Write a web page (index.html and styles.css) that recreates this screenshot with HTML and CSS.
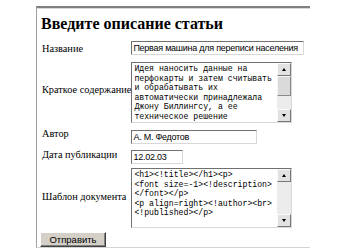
FILE: index.html
```html
<!DOCTYPE html>
<html lang="ru">
<head>
  <meta charset="UTF-8">
  <title>Описание статьи</title>
  <link rel="stylesheet" href="styles.css">
</head>
<body>
  <div class="frame">
    <h1>Введите описание статьи</h1>
    <form class="article-form">
      <table class="fields">
        <tr>
          <td class="label">Название</td>
          <td><input type="text" class="inp inp-title" value="Первая машина для переписи населения"></td>
        </tr>
        <tr>
          <td class="label">Краткое содержание</td>
          <td>
            <div class="box box-summary">
              <textarea class="area">Идея наносить данные на перфокарты и затем считывать и обрабатывать их автоматически принадлежала Джону Биллингсу, а ее техническое решение</textarea>
              <div class="vbar">
                <span class="vbtn up"></span>
                <span class="track"><span class="thumb"></span></span>
                <span class="vbtn down"></span>
              </div>
            </div>
          </td>
        </tr>
        <tr>
          <td class="label">Автор</td>
          <td><input type="text" class="inp inp-author" value="А. М. Федотов"></td>
        </tr>
        <tr>
          <td class="label">Дата публикации</td>
          <td><input type="text" class="inp inp-date" value="12.02.03"></td>
        </tr>
        <tr>
          <td class="label">Шаблон документа</td>
          <td>
            <div class="box box-template">
              <textarea class="area">&lt;h1&gt;&lt;!title&gt;&lt;/h1&gt;&lt;p&gt;
&lt;font size=-1&gt;&lt;!description&gt;
&lt;/font&gt;&lt;/p&gt;
&lt;p align=right&gt;&lt;!author&gt;&lt;br&gt;
&lt;!published&gt;&lt;/p&gt;</textarea>
              <div class="vbar">
                <span class="vbtn up"></span>
                <span class="track"></span>
                <span class="vbtn down"></span>
              </div>
            </div>
          </td>
        </tr>
      </table>
      <button type="button" class="send">Отправить</button>
    </form>
  </div>
</body>
</html>
```

FILE: styles.css
```css
body {
  margin: 0; background: #fff; color: #000;
  font-family: "Liberation Serif", "Times New Roman", serif;
}
.frame {
  margin: 6px 0 0 36px; width: 274px; height: 242px;
  border-top: 2px solid #808080; border-left: 1px solid #a0a0a0;
  border-bottom: 1px solid #d4d4d4;
  box-shadow: inset 0 1px 0 #d8d8d8;
  padding: 0 0 0 2px; box-sizing: border-box;
}
h1 { font-size: 16px; font-weight: bold; margin: 0; padding: 7px 0 0 2px; line-height: 18px; }
.fields { border-collapse: collapse; margin-top: 8px; }
.fields td { padding: 0; vertical-align: middle; }
.label { font-size: 10.3px; padding-left: 3px !important; width: 87px; white-space: nowrap; }

.inp {
  display: block; box-sizing: border-box; height: 14px; margin: 0; padding: 0 1px;
  font-family: "Liberation Sans", Arial, sans-serif; font-size: 9px; letter-spacing: -0.25px;
  border: 1px solid #707070; border-right-color: #d8d8d8; border-bottom-color: #d8d8d8;
  color: #000; outline: none;
}
.inp-title { width: 173px; }
.inp-author { width: 126px; margin-top: 7px; }
.inp-date { width: 52px; margin-top: 6px; }

.box {
  display: flex; width: 161px; box-sizing: border-box;
  border: 1px solid #707070; border-right-color: #d8d8d8; border-bottom-color: #d8d8d8;
}
.box-summary { height: 61px; margin-top: 7px; }
.box-template { height: 60px; margin-top: 4px; }
.area {
  flex: 1; min-width: 0; margin: 0; padding: 1px 0 0 2px; border: none; resize: none; outline: none;
  font-family: "Liberation Mono", "Courier New", monospace; font-size: 8.2px; line-height: 9.5px;
  overflow: hidden; white-space: pre-wrap; color: #000; background: #fff;
}
.vbar { width: 14px; display: flex; flex-direction: column; background: #ececec; }
.vbtn {
  display: flex; align-items: center; justify-content: center;
  height: 13px; box-sizing: border-box; background: #e2e2e2;
  border: 1px solid #fafafa; border-right-color: #777; border-bottom-color: #777;
}
.vbtn::after { content: ""; border-left: 2.5px solid transparent; border-right: 2.5px solid transparent; }
.up::after { border-bottom: 3px solid #000; }
.down::after { border-top: 3px solid #000; }
.track { flex: 1; display: block; }
.thumb {
  display: block; height: 20px; box-sizing: border-box; background: #dadada;
  border: 1px solid #f6f6f6; border-right-color: #888; border-bottom-color: #888;
}

.send {
  display: block; margin: 4px 0 0 1px; width: 66px; height: 15px; padding: 0;
  font-family: "Liberation Sans", Arial, sans-serif; font-size: 9.5px; color: #000;
  background: #d4d0c8; border: 1px solid #fff; border-right-color: #404040; border-bottom-color: #404040;
  box-shadow: inset -1px -1px 0 #808080;
}
```
